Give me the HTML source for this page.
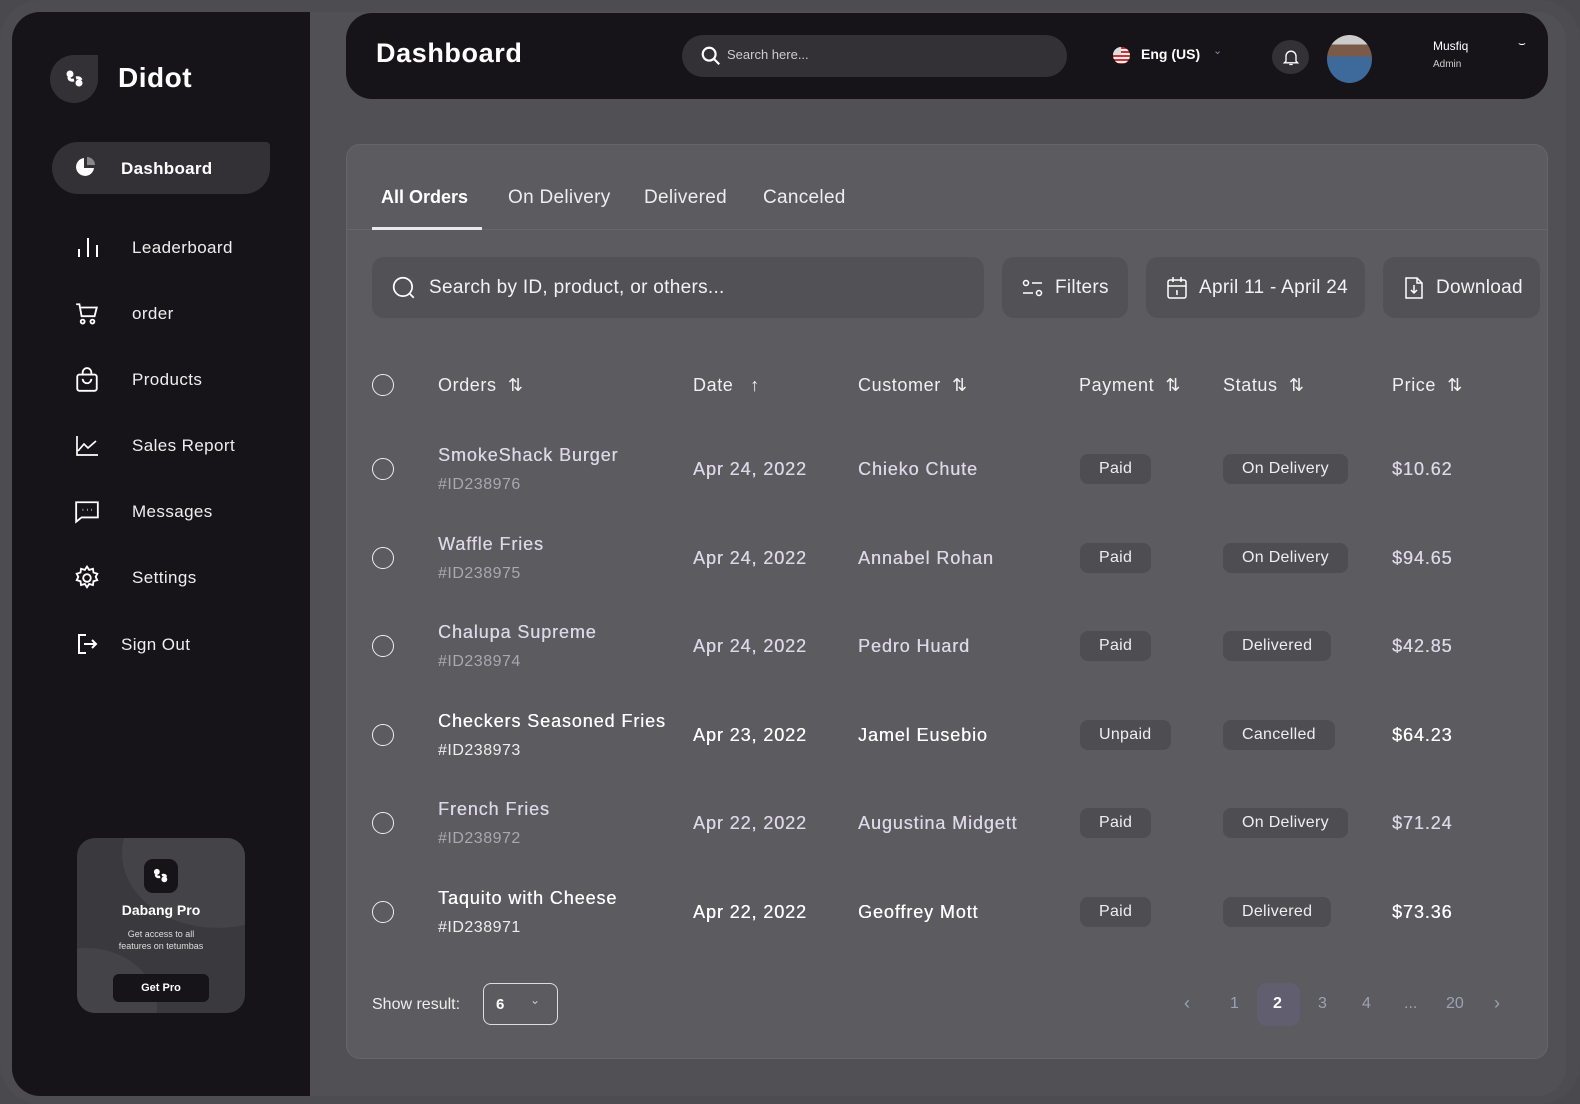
<!DOCTYPE html>
<html><head><meta charset="utf-8"><style>
*{box-sizing:border-box;margin:0;padding:0}
body{width:1580px;height:1104px;background:#4a494d;font-family:"Liberation Sans",sans-serif;position:relative;overflow:hidden;color:#fff}
.abs{position:absolute}
.frame{left:0;top:0;width:1580px;height:1104px;border-radius:40px;background:#4d4c50}
.side{left:12px;top:12px;width:298px;height:1084px;background:#161418;border-radius:28px 0 0 28px}
.main{left:310px;top:12px;width:1256px;height:1084px;background:#515054;border-radius:0 28px 28px 0}
.hdr{left:346px;top:13px;width:1202px;height:86px;background:#161418;border-radius:26px}
.panel{left:346px;top:144px;width:1202px;height:915px;background:#5c5b5f;border-radius:14px;border:1px solid #66656a}
.nav{position:absolute;left:132px;font-size:17px;letter-spacing:0.4px;color:#eee}
.ico{position:absolute;left:74px}
.btn{position:absolute;top:257px;height:61px;background:#525155;border-radius:12px;font-size:19px;letter-spacing:0.3px;color:#f2f2f2;display:flex;align-items:center}
.th{position:absolute;top:375px;font-size:18px;letter-spacing:0.6px;color:#f0f0f0}
.cell{position:absolute;font-size:18px;letter-spacing:0.9px;color:#dcd8e8;font-weight:bold;-webkit-text-stroke:0}
.cell{font-weight:normal;text-shadow:0.3px 0 0 currentColor}
.id{position:absolute;font-size:16px;letter-spacing:0.5px;color:#a9a7b0}
.pill{position:absolute;height:30px;background:#4e4d52;border-radius:8px;font-size:16px;letter-spacing:0.3px;color:#eee;line-height:30px;padding:0 19px}
.cb{position:absolute;left:372px;width:22px;height:22px;border:1.5px solid #eee;border-radius:50%}
.pg{position:absolute;top:995px;font-size:16px;color:#9aa3b4}
</style></head><body>
<div class="abs frame"></div>
<div class="abs side"></div>
<div class="abs main"></div>

<div class="abs" style="left:50px;top:55px;width:48px;height:48px;background:#333136;border-radius:24px 0 24px 24px"></div>
<svg class="abs" style="left:63px;top:67px" width="24" height="24" viewBox="0 0 24 24"><circle cx="7" cy="7" r="3.5" fill="#fff"/><path d="M6 10 Q6 14 11 13" stroke="#fff" stroke-width="3" fill="none"/><circle cx="16" cy="16" r="3.5" fill="#fff"/><path d="M13 11 Q17 10 18 13" stroke="#fff" stroke-width="3" fill="none"/></svg>
<div class="abs" style="left:118px;top:62px;font-size:28px;font-weight:bold;letter-spacing:0.5px;color:#fff">Didot</div>

<div class="abs" style="left:52px;top:142px;width:218px;height:52px;background:#333136;border-radius:26px 4px 26px 26px"></div>
<svg class="abs" style="left:74px;top:155px" width="24" height="24" viewBox="0 0 24 24"><path d="M10 3 A9 9 0 1 0 20 13 L10 13 Z" fill="#fff"/><path d="M13 2 A8 8 0 0 1 21 10 L13 10Z" fill="#888"/></svg>
<div class="abs" style="left:121px;top:159px;font-size:17px;letter-spacing:0.3px;font-weight:bold">Dashboard</div>

<svg class="ico" style="top:236px" width="28" height="24" viewBox="0 0 28 24" stroke="#fff" stroke-width="2" fill="none"><path d="M5 13v8M14 2v19M23 9v12"/></svg>
<div class="nav" style="top:238px">Leaderboard</div>
<svg class="ico" style="top:301px" width="26" height="26" viewBox="0 0 24 24" stroke="#fff" stroke-width="1.7" fill="none"><path d="M2 3h3l2 11h12l2-8H6"/><circle cx="8" cy="19" r="1.8"/><circle cx="17" cy="19" r="1.8"/></svg>
<div class="nav" style="top:304px">order</div>
<svg class="ico" style="top:367px" width="26" height="26" viewBox="0 0 24 24" stroke="#fff" stroke-width="1.7" fill="none"><rect x="3" y="7" width="18" height="15" rx="2"/><path d="M8 7V5a4 4 0 0 1 8 0v2M8 11a4 4 0 0 0 8 0"/></svg>
<div class="nav" style="top:370px">Products</div>
<svg class="ico" style="top:434px" width="26" height="24" viewBox="0 0 24 24" stroke="#fff" stroke-width="1.7" fill="none"><path d="M2 2v19h21M3 17l6-7 4 4 8-7"/></svg>
<div class="nav" style="top:436px">Sales Report</div>
<svg class="ico" style="top:499px" width="26" height="26" viewBox="0 0 24 24" stroke="#fff" stroke-width="1.7" fill="none"><path d="M2 3h20v14H7l-5 4Z"/><path d="M8 10h.5M12 10h.5M16 10h.5" stroke-width="2"/></svg>
<div class="nav" style="top:502px">Messages</div>
<svg class="ico" style="top:565px" width="26" height="26" viewBox="0 0 24 24" stroke="#fff" stroke-width="1.7" fill="none"><circle cx="12" cy="12" r="3.5"/><path d="M12 1.5l2 3 3.5-1 .5 3.5 3.5 1-1.5 3 1.5 3-3.5 1-.5 3.5-3.5-1-2 3-2-3-3.5 1-.5-3.5-3.5-1 1.5-3-1.5-3 3.5-1 .5-3.5 3.5 1z"/></svg>
<div class="nav" style="top:568px">Settings</div>
<svg class="ico" style="top:632px" width="26" height="24" viewBox="0 0 24 24" stroke="#fff" stroke-width="2" fill="none"><path d="M11 3H4v18h7M9 12h12M17 8l4 4-4 4"/></svg>
<div class="nav" style="top:635px;left:121px">Sign Out</div>

<div class="abs" style="left:77px;top:838px;width:168px;height:175px;border-radius:18px;background:#3a393d;overflow:hidden">
<div class="abs" style="left:45px;top:-60px;width:190px;height:150px;border-radius:50%;background:#444347"></div>
<div class="abs" style="left:-60px;top:110px;width:140px;height:120px;border-radius:50%;background:#444347"></div>
</div>
<div class="abs" style="left:144px;top:859px;width:34px;height:34px;border-radius:9px;background:#161418"></div>
<svg class="abs" style="left:151px;top:866px" width="20" height="20" viewBox="0 0 24 24"><circle cx="7" cy="7" r="3.5" fill="#fff"/><path d="M6 10 Q6 14 11 13" stroke="#fff" stroke-width="3" fill="none"/><circle cx="16" cy="16" r="3.5" fill="#fff"/><path d="M13 11 Q17 10 18 13" stroke="#fff" stroke-width="3" fill="none"/></svg>
<div class="abs" style="left:77px;width:168px;top:902px;text-align:center;font-size:14px;font-weight:bold">Dabang Pro</div>
<div class="abs" style="left:77px;width:168px;top:928px;text-align:center;font-size:9px;color:#ddd;line-height:12px">Get access to all<br>features on tetumbas</div>
<div class="abs" style="left:113px;top:974px;width:96px;height:28px;background:#161418;border-radius:6px;text-align:center;line-height:28px;font-size:11px;font-weight:bold">Get Pro</div>

<div class="abs hdr"></div>
<div class="abs" style="left:376px;top:38px;font-size:27px;letter-spacing:0.6px;font-weight:bold">Dashboard</div>
<div class="abs" style="left:682px;top:35px;width:385px;height:42px;border-radius:21px;background:#333136"></div>
<svg class="abs" style="left:700px;top:45px" width="22" height="22" viewBox="0 0 24 24" stroke="#fff" stroke-width="2.4" fill="none"><circle cx="10" cy="10" r="7"/><path d="M15 15l6 6"/></svg>
<div class="abs" style="left:727px;top:47px;font-size:13px;color:#ccc">Search here...</div>
<div class="abs" style="left:1113px;top:47px;width:17px;height:17px;border-radius:50%;background:repeating-linear-gradient(#c33 0 2px,#eee 2px 4px)"></div>
<div class="abs" style="left:1113px;top:47px;width:8px;height:8px;background:#ddd;border-radius:8px 0 0 0"></div>
<div class="abs" style="left:1141px;top:46px;font-size:14px;font-weight:bold">Eng (US)</div>
<div class="abs" style="left:1213px;top:44px;font-size:11px;color:#8a86a0">⌄</div>
<div class="abs" style="left:1272px;top:40px;width:37px;height:34px;border-radius:50%;background:#333136"></div>
<svg class="abs" style="left:1281px;top:47px" width="20" height="20" viewBox="0 0 24 24" stroke="#fff" stroke-width="1.6" fill="none"><path d="M6 17V11a6 6 0 0 1 12 0v6l2 2H4zM10 21h4"/></svg>
<div class="abs" style="left:1327px;top:35px;width:45px;height:48px;border-radius:50%;background:linear-gradient(#ccc 0 20%,#7a5a48 20% 45%,#3d6a9a 45%)"></div>
<div class="abs" style="left:1433px;top:39px;font-size:12px">Musfiq</div>
<div class="abs" style="left:1433px;top:59px;font-size:10px;color:#ccc">Admin</div>
<div class="abs" style="left:1518px;top:36px;font-size:12px">⌣</div>

<div class="abs panel"></div>
<div class="abs" style="left:347px;top:229px;width:1200px;height:1px;background:#676670"></div>
<div class="abs" style="left:381px;top:187px;font-size:18px;font-weight:bold">All Orders</div>
<div class="abs" style="left:372px;top:227px;width:110px;height:3px;background:#e8e8ee"></div>
<div class="abs" style="left:508px;top:187px;font-size:19px;letter-spacing:0.3px;color:#eee">On Delivery</div>
<div class="abs" style="left:644px;top:187px;font-size:19px;letter-spacing:0.3px;color:#eee">Delivered</div>
<div class="abs" style="left:763px;top:187px;font-size:19px;letter-spacing:0.3px;color:#eee">Canceled</div>

<div class="btn" style="left:372px;width:612px"><svg style="margin-left:19px" width="26" height="26" viewBox="0 0 24 24" stroke="#fff" stroke-width="1.6" fill="none"><circle cx="11" cy="11" r="8.5"/><path d="M17 17l4 4"/></svg><span style="margin-left:12px">Search by ID, product, or others...</span></div>
<div class="btn" style="left:1002px;width:126px"><svg style="margin-left:20px" width="22" height="20" viewBox="0 0 22 20" stroke="#fff" stroke-width="1.5" fill="none"><circle cx="4" cy="5" r="2.5"/><path d="M10 5h10M1 15h10"/><circle cx="17" cy="15" r="2.5"/></svg><span style="margin-left:11px">Filters</span></div>
<div class="btn" style="left:1146px;width:219px"><svg style="margin-left:20px" width="22" height="24" viewBox="0 0 22 24" stroke="#fff" stroke-width="1.5" fill="none"><rect x="2" y="4" width="18" height="18" rx="2"/><path d="M2 10h18M7 1v5M15 1v5M10 15h1v4"/></svg><span style="margin-left:11px">April 11 - April 24</span></div>
<div class="btn" style="left:1383px;width:157px"><svg style="margin-left:21px" width="20" height="24" viewBox="0 0 20 24" stroke="#fff" stroke-width="1.5" fill="none"><path d="M2 2h11l5 5v15H2zM13 2v5h5M10 9v8M7 14l3 3 3-3"/></svg><span style="margin-left:12px">Download</span></div>

<div class="cb" style="top:374px"></div>
<div class="th" style="left:438px">Orders&nbsp; ⇅</div>
<div class="th" style="left:693px">Date &nbsp; ↑</div>
<div class="th" style="left:858px">Customer&nbsp; ⇅</div>
<div class="th" style="left:1079px">Payment&nbsp; ⇅</div>
<div class="th" style="left:1223px">Status&nbsp; ⇅</div>
<div class="th" style="left:1392px">Price&nbsp; ⇅</div>

<div class="cb" style="top:458px"></div>
<div class="cell" style="left:438px;top:445px">SmokeShack Burger</div><div class="id" style="left:438px;top:476px">#ID238976</div>
<div class="cell" style="left:693px;top:459px">Apr 24, 2022</div><div class="cell" style="left:858px;top:459px">Chieko Chute</div>
<div class="pill" style="left:1080px;top:454px">Paid</div><div class="pill" style="left:1223px;top:454px">On Delivery</div>
<div class="cell" style="left:1392px;top:459px">$10.62</div>

<div class="cb" style="top:547px"></div>
<div class="cell" style="left:438px;top:534px">Waffle Fries</div><div class="id" style="left:438px;top:565px">#ID238975</div>
<div class="cell" style="left:693px;top:548px">Apr 24, 2022</div><div class="cell" style="left:858px;top:548px">Annabel Rohan</div>
<div class="pill" style="left:1080px;top:543px">Paid</div><div class="pill" style="left:1223px;top:543px">On Delivery</div>
<div class="cell" style="left:1392px;top:548px">$94.65</div>

<div class="cb" style="top:635px"></div>
<div class="cell" style="left:438px;top:622px">Chalupa Supreme</div><div class="id" style="left:438px;top:653px">#ID238974</div>
<div class="cell" style="left:693px;top:636px">Apr 24, 2022</div><div class="cell" style="left:858px;top:636px">Pedro Huard</div>
<div class="pill" style="left:1080px;top:631px">Paid</div><div class="pill" style="left:1223px;top:631px">Delivered</div>
<div class="cell" style="left:1392px;top:636px">$42.85</div>

<div class="cb" style="top:724px"></div>
<div class="cell" style="left:438px;top:711px;color:#fff">Checkers Seasoned Fries</div><div class="id" style="left:438px;top:742px;color:#eee">#ID238973</div>
<div class="cell" style="left:693px;top:725px;color:#fff">Apr 23, 2022</div><div class="cell" style="left:858px;top:725px;color:#fff">Jamel Eusebio</div>
<div class="pill" style="left:1080px;top:720px">Unpaid</div><div class="pill" style="left:1223px;top:720px">Cancelled</div>
<div class="cell" style="left:1392px;top:725px;color:#fff">$64.23</div>

<div class="cb" style="top:812px"></div>
<div class="cell" style="left:438px;top:799px">French Fries</div><div class="id" style="left:438px;top:830px">#ID238972</div>
<div class="cell" style="left:693px;top:813px">Apr 22, 2022</div><div class="cell" style="left:858px;top:813px">Augustina Midgett</div>
<div class="pill" style="left:1080px;top:808px">Paid</div><div class="pill" style="left:1223px;top:808px">On Delivery</div>
<div class="cell" style="left:1392px;top:813px">$71.24</div>

<div class="cb" style="top:901px"></div>
<div class="cell" style="left:438px;top:888px;color:#fff">Taquito with Cheese</div><div class="id" style="left:438px;top:919px;color:#eee">#ID238971</div>
<div class="cell" style="left:693px;top:902px;color:#fff">Apr 22, 2022</div><div class="cell" style="left:858px;top:902px;color:#fff">Geoffrey Mott</div>
<div class="pill" style="left:1080px;top:897px">Paid</div><div class="pill" style="left:1223px;top:897px">Delivered</div>
<div class="cell" style="left:1392px;top:902px;color:#fff">$73.36</div>

<div class="abs" style="left:372px;top:996px;font-size:16px;color:#eee">Show result:</div>
<div class="abs" style="left:483px;top:983px;width:75px;height:42px;border:1.5px solid #ddd;border-radius:8px"></div>
<div class="abs" style="left:496px;top:996px;font-size:15px;font-weight:bold">6</div>
<div class="abs" style="left:530px;top:993px;font-size:12px;color:#ccc">⌄</div>
<div class="pg" style="left:1184px;font-size:18px;top:993px">‹</div>
<div class="pg" style="left:1230px">1</div>
<div class="abs" style="left:1257px;top:983px;width:43px;height:43px;border-radius:10px;background:#615e70"></div>
<div class="pg" style="left:1273px;color:#fff;font-weight:bold">2</div>
<div class="pg" style="left:1318px">3</div>
<div class="pg" style="left:1362px">4</div>
<div class="pg" style="left:1404px">...</div>
<div class="pg" style="left:1446px">20</div>
<div class="pg" style="left:1494px;font-size:18px;top:993px">›</div>
</body></html>
